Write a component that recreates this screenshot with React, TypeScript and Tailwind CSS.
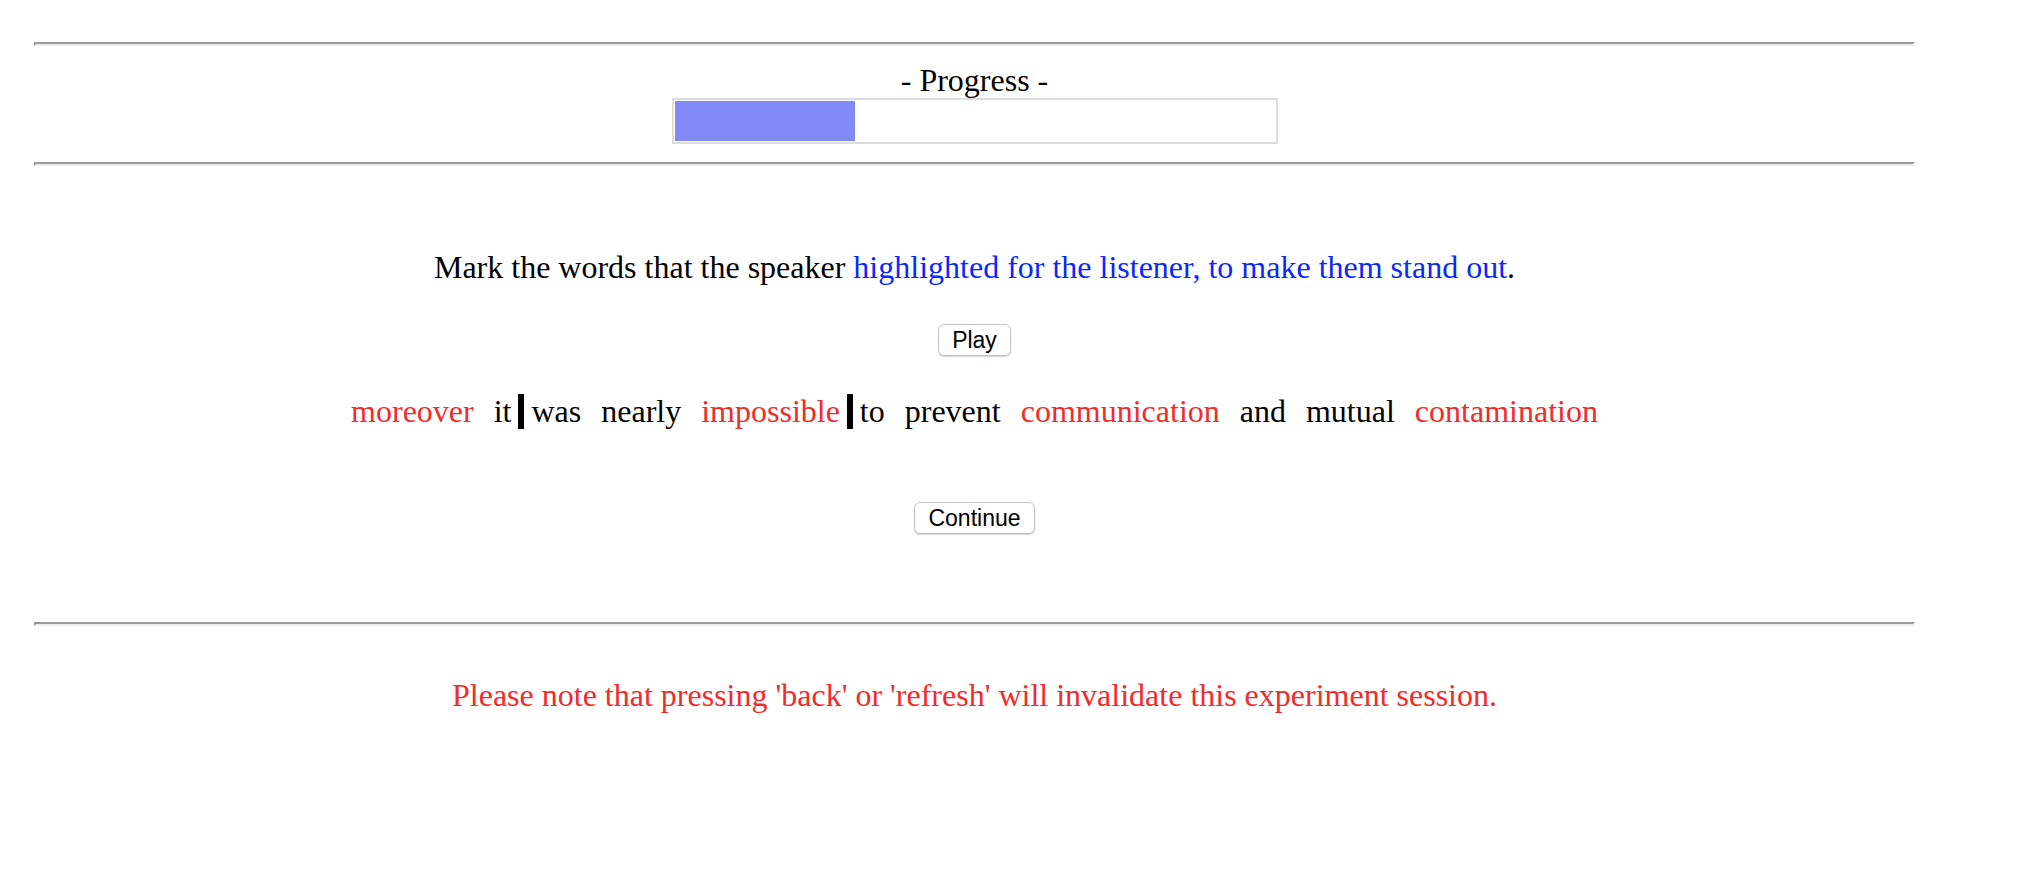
import React from 'react';

const Rule: React.FC<{ className?: string }> = ({ className = '' }) => (
  <div
    className={`h-0 border-2 border-t-[#9a9a9a] border-l-[#9a9a9a] border-b-[#eeeeee] border-r-[#eeeeee] ${className}`}
  />
);

const Btn: React.FC<{ label: string; className?: string }> = ({ label, className = '' }) => (
  <div className={`flex justify-center ${className}`}>
    <button
      type="button"
      className="h-[32px] px-[13px] bg-white border border-[#c4c4c4] rounded-[6px] shadow-[0_1px_1px_rgba(0,0,0,0.18)] font-['Liberation_Sans',Arial,sans-serif] text-[23px] leading-none text-black"
    >
      {label}
    </button>
  </div>
);

// words of the sentence, with a flag for red (highlighted) and a marked boundary after
const words: { text: string; red?: boolean; mark?: boolean }[] = [
  { text: 'moreover', red: true },
  { text: 'it', mark: true },
  { text: 'was' },
  { text: 'nearly' },
  { text: 'impossible', red: true, mark: true },
  { text: 'to' },
  { text: 'prevent' },
  { text: 'communication', red: true },
  { text: 'and' },
  { text: 'mutual' },
  { text: 'contamination', red: true },
];

export default function App() {
  return (
    <div className="min-h-[872px] bg-white">
      <div className="w-[1881px] ml-[34px] pt-[42px] text-center font-['Liberation_Serif','Times_New_Roman',serif] text-[32px] text-black">
        <Rule />

        <div className="mt-[16px] leading-[37px]">- Progress -</div>
        <div className="mx-auto mt-[-1px] w-[606px] h-[46px] border-2 border-[#dcdcdc] p-[1px]">
          <div className="h-full w-[30%] bg-[#8189f7]" />
        </div>

        <Rule className="mt-[18px]" />

        <div className="mt-[83px] leading-[37px]">
          Mark the words that the speaker{' '}
          <span className="text-[#0a28fb]">highlighted for the listener, to make them stand out</span>.
        </div>

        <Btn label="Play" className="mt-[38px]" />

        <div className="mt-[38px] flex justify-center items-start">
          {words.map((w, i) => (
            <React.Fragment key={i}>
              <span className={`h-[35px] leading-[34px] ${w.red ? 'text-[#f22b2b]' : 'text-black'}`}>{w.text}</span>
              {i < words.length - 1 && (
                <span className={`mx-[7px] w-[6px] h-[35px] ${w.mark ? 'bg-black' : 'bg-transparent'}`} />
              )}
            </React.Fragment>
          ))}
        </div>

        <Btn label="Continue" className="mt-[73px]" />

        <Rule className="mt-[88px]" />

        <div className="mt-[51px] leading-[37px] text-[#f22b2b]">
          Please note that pressing 'back' or 'refresh' will invalidate this experiment session.
        </div>
      </div>
    </div>
  );
}
